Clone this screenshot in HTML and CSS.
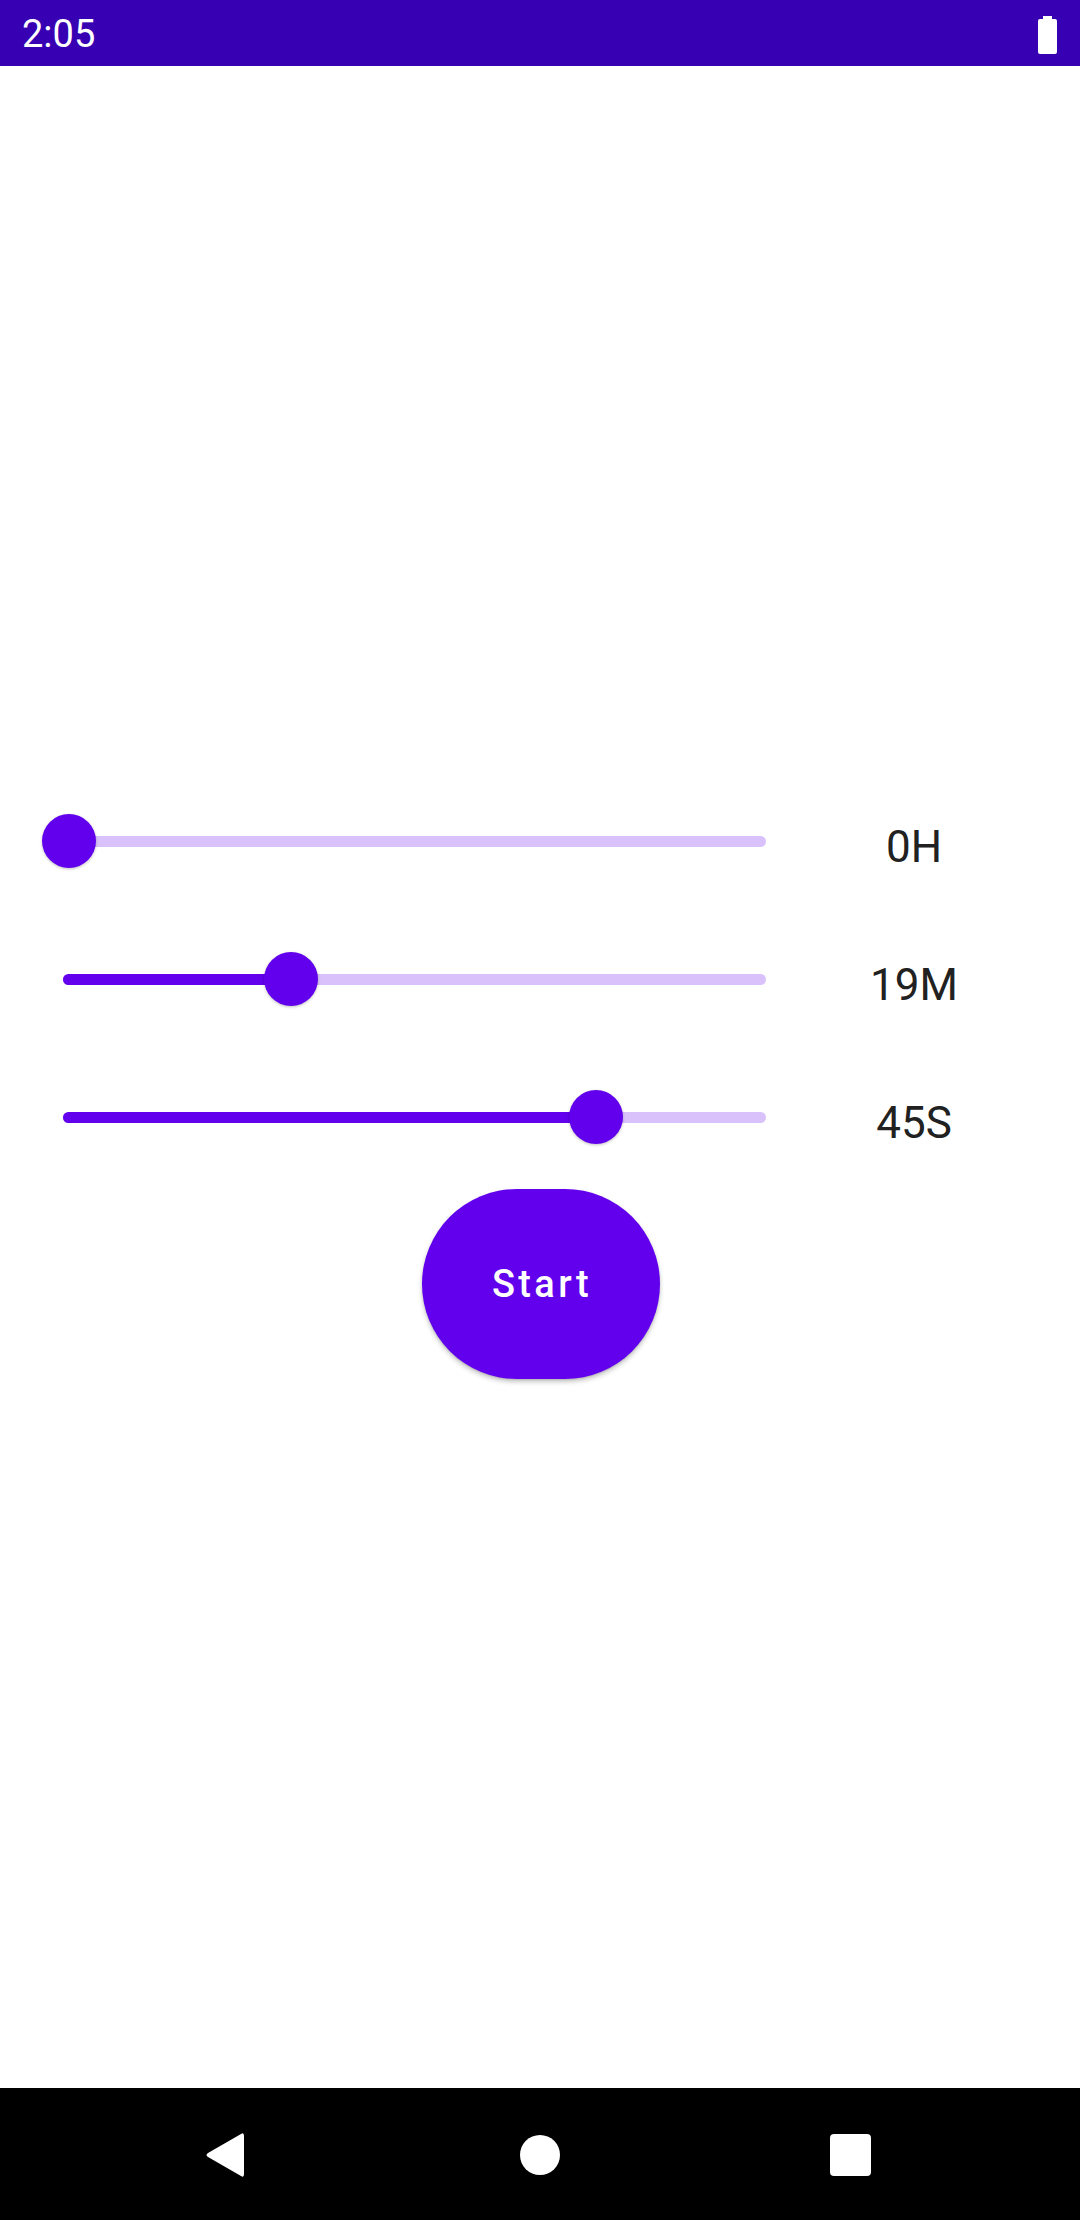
FILE: index.html
```html
<!DOCTYPE html>
<html lang="en">
<head>
  <meta charset="UTF-8">
  <meta name="viewport" content="width=device-width, initial-scale=1.0">
  <link rel="stylesheet" href="styles.css">
  <title>Timer</title>
</head>
<body>
  <div class="screen">
    <div class="status-bar">
      <span class="clock">2:05</span>
      <svg class="battery" width="19" height="38" viewBox="0 0 19 38">
        <rect x="5" y="0" width="9" height="4" fill="#fff"/>
        <rect x="0" y="3" width="19" height="35" rx="2" fill="#fff"/>
      </svg>
    </div>

    <main class="content">
      <div class="row">
        <div class="slider">
          <div class="track" style="--v: 0">
            <div class="fill"></div>
            <div class="thumb"></div>
          </div>
        </div>
        <div class="label">0H</div>
      </div>
      <div class="row">
        <div class="slider">
          <div class="track" style="--v: 0.322">
            <div class="fill"></div>
            <div class="thumb"></div>
          </div>
        </div>
        <div class="label">19M</div>
      </div>
      <div class="row">
        <div class="slider">
          <div class="track" style="--v: 0.763">
            <div class="fill"></div>
            <div class="thumb"></div>
          </div>
        </div>
        <div class="label">45S</div>
      </div>
      <div class="actions">
        <button class="start-btn">Start</button>
      </div>
    </main>

    <div class="nav-bar">
      <div class="nav-btn">
        <svg width="40" height="46" viewBox="0 0 40 46">
          <path d="M36 2 Q39 0 39 4 L39 42 Q39 46 36 44 L3 25 Q0 23 3 21 Z" fill="#fff"/>
        </svg>
      </div>
      <div class="nav-btn">
        <svg width="40" height="40" viewBox="0 0 40 40">
          <circle cx="20" cy="20" r="20" fill="#fff"/>
        </svg>
      </div>
      <div class="nav-btn">
        <svg width="41" height="42" viewBox="0 0 41 42">
          <rect x="0" y="0" width="41" height="42" rx="4" fill="#fff"/>
        </svg>
      </div>
    </div>
  </div>
</body>
</html>
```

FILE: styles.css
```css
body {
  margin: 0;
  padding: 0;
  font-family: Roboto, "Noto Sans", sans-serif;
  background: #ffffff;
}

.screen {
  width: 1080px;
  height: 2220px;
  display: flex;
  flex-direction: column;
}

.status-bar {
  height: 66px;
  background-color: #3700B3;
  display: flex;
  align-items: center;
  justify-content: space-between;
  padding: 0 23px 0 22px;
  color: #fff;
}

.clock {
  font-size: 38px;
  margin-top: 2px;
}

.battery {
  margin-top: 4px;
}

.content {
  flex: 1;
  padding-top: 706px;
  display: flex;
  flex-direction: column;
}

.row {
  height: 138px;
  display: grid;
  grid-template-columns: 790px 248px;
  align-items: center;
}

.slider {
  padding-left: 63px;
}

.track {
  position: relative;
  width: 703px;
  height: 11px;
  border-radius: 6px;
  background-color: rgba(98, 0, 238, 0.24);
}

.fill {
  width: calc(5.5px + var(--v) * 692px);
  height: 100%;
  border-radius: 6px;
  background-color: #6200EE;
}

.thumb {
  position: absolute;
  top: 50%;
  left: calc(5.5px + var(--v) * 692px);
  width: 54px;
  height: 54px;
  margin: -27px 0 0 -27px;
  border-radius: 50%;
  background-color: #6200EE;
  box-shadow: 0 1px 3px rgba(0, 0, 0, 0.25);
}

.label {
  text-align: center;
  font-size: 44px;
  color: #212121;
  margin-top: 11px;
}

.actions {
  display: flex;
  justify-content: center;
  padding-top: 3px;
}

.start-btn {
  width: 238px;
  height: 190px;
  margin-left: 1px;
  padding: 0 0 0 3px;
  border: none;
  border-radius: 95px;
  background-color: #6200EE;
  color: #fff;
  font-family: Roboto, sans-serif;
  font-weight: 500;
  font-size: 38px;
  letter-spacing: 3.4px;
  box-shadow: 0 3px 5px rgba(0, 0, 0, 0.22), 0 1px 2px rgba(0, 0, 0, 0.12);
}

.nav-bar {
  height: 132px;
  background-color: #000;
  display: flex;
  align-items: center;
  padding-left: 185px;
  gap: 235px;
}

.nav-btn {
  width: 80px;
  display: flex;
  justify-content: center;
  align-items: center;
  margin-top: 2px;
}

.nav-btn:last-child {
  margin-left: -5px;
}
```
